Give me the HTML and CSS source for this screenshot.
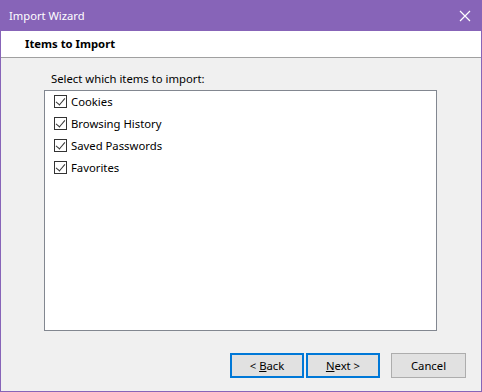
FILE: index.html
```html
<!DOCTYPE html>
<html lang="en">
<head>
  <meta charset="UTF-8">
  <title>Import Wizard</title>
  <link rel="stylesheet" href="styles.css">
</head>
<body>
  <div class="window">
    <div class="titlebar">
      <span class="title">Import Wizard</span>
      <svg class="close" width="12" height="12" viewBox="0 0 12 12">
        <path d="M1 1 L11 11 M11 1 L1 11" stroke="#fff" stroke-width="1.2" fill="none"/>
      </svg>
    </div>
    <div class="header">Items to Import</div>
    <div class="content">
      <div class="label">Select which items to import:</div>
      <div class="list">
        <label class="item"><span class="check"></span>Cookies</label>
        <label class="item"><span class="check"></span>Browsing History</label>
        <label class="item"><span class="check"></span>Saved Passwords</label>
        <label class="item"><span class="check"></span>Favorites</label>
      </div>
      <div class="buttons">
        <button class="btn btn-focus">&lt; <u>B</u>ack</button>
        <button class="btn btn-focus"><u>N</u>ext &gt;</button>
        <button class="btn btn-cancel">Cancel</button>
      </div>
    </div>
  </div>
</body>
</html>
```

FILE: styles.css
```css
* {
  margin: 0;
  padding: 0;
  box-sizing: border-box;
}
body {
  font-family: "Noto Sans", "Open Sans", sans-serif;
  font-size: 11.3px;
  color: #000;
  background-color: #fff;
}
.window {
  width: 482px;
  height: 392px;
  border: 1px solid #8764b8;
  border-top: none;
  background-color: #f0f0f0;
  display: flex;
  flex-direction: column;
}
.titlebar {
  height: 31px;
  margin: 0 -1px;
  background-color: #8764b8;
  color: #fff;
  display: flex;
  align-items: center;
  justify-content: space-between;
  padding: 0 11px 0 9px;
}
.title {
  font-size: 11.2px;
}
.header {
  height: 27px;
  background-color: #fff;
  border-bottom: 1px solid #a0a0a0;
  padding-left: 24px;
  font-weight: bold;
  line-height: 26px;
}
.content {
  flex: 1;
  padding: 13px 0 0 43px;
  display: flex;
  flex-direction: column;
}
.label {
  line-height: 16px;
  padding-left: 7px;
  margin-bottom: 3px;
}
.list {
  width: 393px;
  height: 241px;
  background-color: #fff;
  border: 1px solid #828790;
  padding: 0 0 0 9px;
}
.item {
  display: flex;
  align-items: center;
  height: 22px;
  padding-bottom: 2px;
  gap: 4px;
}
.check {
  width: 13px;
  height: 13px;
  border: 1px solid #333;
  position: relative;
}
.check::after {
  content: "";
  position: absolute;
  left: 3px;
  top: 0px;
  width: 4px;
  height: 8px;
  border: solid #333;
  border-width: 0 1.5px 1.5px 0;
  transform: rotate(40deg);
}
.buttons {
  display: flex;
  margin-top: 22px;
  padding-left: 186px;
}
.btn {
  width: 74px;
  height: 25px;
  font-family: inherit;
  font-size: 11.3px;
  background-color: #e1e1e1;
  color: #000;
  border: 1px solid #adadad;
}
.btn-focus {
  border: 2px solid #0078d7;
  margin-right: 2px;
}
.btn-cancel {
  width: 75px;
  margin-left: 9px;
}
```
